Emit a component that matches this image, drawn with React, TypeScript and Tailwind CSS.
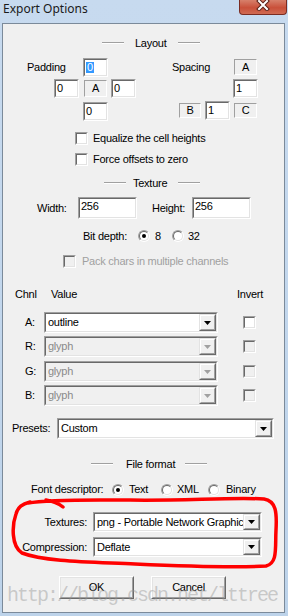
import React from "react";

const sunkenOuter =
  "border border-t-[#a0a0a0] border-l-[#a0a0a0] border-b-white border-r-white";
const sunkenInner =
  "border border-t-[#696969] border-l-[#696969] border-b-[#e3e3e3] border-r-[#e3e3e3]";
const raisedOuter =
  "border border-t-[#e3e3e3] border-l-[#e3e3e3] border-b-[#696969] border-r-[#696969]";
const raisedInner =
  "border border-t-white border-l-white border-b-[#a0a0a0] border-r-[#a0a0a0]";

function Edit({ cls, children, top }: { cls: string; children?: React.ReactNode; top?: boolean }) {
  return (
    <div className={`${cls} ${sunkenOuter} flex shrink-0`}>
      <div
        className={`flex-1 ${sunkenInner} bg-white flex ${top ? "items-start pt-[2px]" : "items-center"} pl-[1px] leading-none`}
      >
        {children}
      </div>
    </div>
  );
}

function Static({ cls, children }: { cls: string; children: React.ReactNode }) {
  return (
    <div className={`${cls} ${sunkenOuter} shrink-0 flex items-center justify-center leading-none`}>
      {children}
    </div>
  );
}

function Check({ disabled }: { disabled?: boolean }) {
  return (
    <div className={`w-[13px] h-[13px] shrink-0 ${sunkenOuter} flex`}>
      <div className={`flex-1 ${sunkenInner} ${disabled ? "bg-[#f0f0f0]" : "bg-white"}`} />
    </div>
  );
}

function Radio({ on }: { on?: boolean }) {
  return (
    <div className={`w-[12px] h-[12px] shrink-0 rounded-full ${sunkenOuter} flex`}>
      <div className={`flex-1 rounded-full ${sunkenInner} bg-white flex items-center justify-center`}>
        {on && <div className="w-[4px] h-[4px] rounded-full bg-black" />}
      </div>
    </div>
  );
}

function Arrow({ disabled }: { disabled?: boolean }) {
  return (
    <svg width="7" height="4" viewBox="0 0 7 4">
      <polygon points="0,0 7,0 3.5,4" fill={disabled ? "#a0a0a0" : "#000"} />
    </svg>
  );
}

function Combo({
  cls,
  text,
  disabled,
}: {
  cls: string;
  text: string;
  disabled?: boolean;
}) {
  return (
    <div className={`${cls} ${sunkenOuter} flex shrink-0`}>
      <div
        className={`flex-1 ${sunkenInner} ${disabled ? "bg-[#f0f0f0] text-[#8a8a8a]" : "bg-white"} flex items-stretch min-w-0`}
      >
        <div className="flex-1 min-w-0 overflow-hidden whitespace-nowrap flex items-center pl-[2px] leading-none">
          {text}
        </div>
        <div className={`w-[17px] shrink-0 ${raisedOuter} flex`}>
          <div className={`flex-1 ${raisedInner} bg-[#f0f0f0] flex items-center justify-center`}>
            <Arrow disabled={disabled} />
          </div>
        </div>
      </div>
    </div>
  );
}

function Line({ cls }: { cls: string }) {
  return <div className={`${cls} w-[22px] h-[2px] border-t border-t-[#a0a0a0] border-b border-b-white shrink-0`} />;
}

function Button({ cls, children }: { cls: string; children: React.ReactNode }) {
  return (
    <div className={`${cls} w-[75px] h-[23px] ${raisedOuter} flex shrink-0 border-t-white border-l-white`}>
      <div className={`flex-1 border border-t-[#e3e3e3] border-l-[#e3e3e3] border-b-[#a0a0a0] border-r-[#a0a0a0] bg-[#f0f0f0] flex items-center justify-center leading-none`}>
        {children}
      </div>
    </div>
  );
}

export default function App() {
  return (
    <div className="relative w-[288px] h-[616px] overflow-hidden bg-[linear-gradient(180deg,#c7daef,#bdd3ea)] font-['Liberation_Sans',sans-serif] text-[11px] tracking-[-0.25px] whitespace-nowrap text-black">
      {/* title bar */}
      <div className="h-[23px] flex justify-between items-start">
        <div className="pl-[3px] pt-[1px] text-[12px] tracking-normal leading-[16px] font-['Noto_Sans',sans-serif] text-[#1a1a1a]">
          Export Options
        </div>
        <div className="mr-[1px] w-[48px] h-[15px] rounded-b-[4px] border border-t-0 border-[#7a2c22] bg-[linear-gradient(180deg,#d7806b,#c9503a_55%,#d06a52)] flex justify-center">
          <svg width="14" height="11" viewBox="0 0 14 11">
            <path d="M3 1 L11 9 M11 1 L3 9" stroke="#5a2018" strokeWidth="4" strokeLinecap="square" />
            <path d="M3 1 L11 9 M11 1 L3 9" stroke="#ffffff" strokeWidth="2" strokeLinecap="square" />
          </svg>
        </div>
      </div>

      {/* client */}
      <div className="ml-[2px] w-[283px] h-[590px] border border-[#7b8a9a] bg-[#f0f0f0] flex flex-col">
        {/* Layout header */}
        <div className="mt-[12px] h-[14px] flex items-center">
          <Line cls="ml-[99px]" />
          <div className="ml-[11px] leading-none">Layout</div>
          <Line cls="ml-[11px]" />
        </div>

        {/* padding / spacing */}
        <div className="mt-[8px] flex flex-col">
          <div className="h-[19px] flex items-start">
            <div className="ml-[24px] w-[56px] h-[19px] flex items-center leading-none">Padding</div>
            <Edit cls="w-[25px] h-[19px]">
              <span className="bg-[#3399ff] text-white px-[1px]">0</span>
            </Edit>
            <div className="ml-[64px] w-[62px] h-[19px] flex items-center leading-none">Spacing</div>
            <Static cls="mt-[1px] w-[23px] h-[16px]">A</Static>
          </div>
          <div className="mt-[2px] h-[19px] flex items-center">
            <Edit cls="ml-[51px] w-[25px] h-[19px]">0</Edit>
            <Static cls="ml-[5px] w-[23px] h-[17px]">A</Static>
            <Edit cls="ml-[4px] w-[25px] h-[19px]">0</Edit>
            <Edit cls="ml-[97px] w-[25px] h-[19px]">1</Edit>
          </div>
          <div className="mt-[3px] h-[19px] flex items-start">
            <Edit cls="ml-[80px] mt-[1px] w-[25px] h-[19px]">0</Edit>
            <Static cls="ml-[71px] mt-[2px] w-[22px] h-[15px]">B</Static>
            <Edit cls="ml-[4px] w-[25px] h-[19px]">1</Edit>
            <Static cls="ml-[4px] mt-[2px] w-[23px] h-[15px]">C</Static>
          </div>
        </div>

        {/* checkboxes */}
        <div className="mt-[12px] h-[13px] flex items-center">
          <div className="ml-[72px]">
            <Check />
          </div>
          <div className="ml-[5px] leading-none">Equalize the cell heights</div>
        </div>
        <div className="mt-[8px] h-[13px] flex items-center">
          <div className="ml-[72px]">
            <Check />
          </div>
          <div className="ml-[5px] leading-none">Force offsets to zero</div>
        </div>

        {/* Texture header */}
        <div className="mt-[10px] h-[14px] flex items-center">
          <Line cls="ml-[101px]" />
          <div className="ml-[7px] leading-none">Texture</div>
          <Line cls="ml-[11px]" />
        </div>

        <div className="mt-[7px] h-[22px] flex items-center">
          <div className="ml-[34px] w-[41px] leading-none">Width:</div>
          <Edit cls="w-[59px] h-[22px]" top>
            256
          </Edit>
          <div className="ml-[15px] w-[40px] leading-none">Height:</div>
          <Edit cls="w-[59px] h-[22px]" top>
            256
          </Edit>
        </div>

        <div className="mt-[11px] h-[12px] flex items-center">
          <div className="ml-[80px] w-[55px] leading-none">Bit depth:</div>
          <Radio on />
          <div className="ml-[5px] w-[17px] leading-none">8</div>
          <Radio />
          <div className="ml-[4px] leading-none">32</div>
        </div>

        <div className="mt-[13px] h-[13px] flex items-center">
          <div className="ml-[60px]">
            <Check disabled />
          </div>
          <div className="ml-[6px] leading-none text-[#a0a0a0]">Pack chars in multiple channels</div>
        </div>

        {/* channels */}
        <div className="mt-[19px] h-[14px] flex items-center">
          <div className="ml-[12px] w-[36px] leading-none">Chnl</div>
          <div className="w-[186px] leading-none">Value</div>
          <div className="leading-none">Invert</div>
        </div>

        {[
          { l: "A:", t: "outline", d: false, mt: "mt-[11px]" },
          { l: "R:", t: "glyph", d: true, mt: "mt-[3px]" },
          { l: "G:", t: "glyph", d: true, mt: "mt-[4px]" },
          { l: "B:", t: "glyph", d: true, mt: "mt-[3px]" },
        ].map((r) => (
          <div key={r.l} className={`${r.mt} h-[21px] flex items-center`}>
            <div className="ml-[22px] w-[19px] leading-none">{r.l}</div>
            <Combo cls="w-[174px] h-[21px]" text={r.t} disabled={r.d} />
            <div className="ml-[25px]">
              <Check disabled={r.d} />
            </div>
          </div>
        ))}

        <div className="mt-[12px] h-[21px] flex items-center">
          <div className="ml-[9px] w-[45px] leading-none">Presets:</div>
          <Combo cls="w-[217px] h-[21px]" text="Custom" />
        </div>

        {/* File format header */}
        <div className="mt-[18px] h-[14px] flex items-center">
          <Line cls="ml-[88px]" />
          <div className="ml-[13px] leading-none">File format</div>
          <Line cls="ml-[10px]" />
        </div>

        <div className="mt-[12px] h-[13px] flex items-center">
          <div className="ml-[28px] w-[81px] leading-none">Font descriptor:</div>
          <Radio on />
          <div className="ml-[5px] w-[32px] leading-none">Text</div>
          <Radio />
          <div className="ml-[4px] w-[31px] leading-none">XML</div>
          <Radio />
          <div className="ml-[6px] leading-none">Binary</div>
        </div>

        <div className="mt-[16px] h-[20px] flex items-center">
          <div className="w-[84px] text-right leading-none">Textures:</div>
          <Combo cls="ml-[6px] w-[169px] h-[20px]" text="png - Portable Network Graphics" />
        </div>
        <div className="mt-[5px] h-[20px] flex items-center">
          <div className="w-[84px] text-right leading-none">Compression:</div>
          <Combo cls="ml-[6px] w-[169px] h-[20px]" text="Deflate" />
        </div>

        <div className="mt-[19px] h-[23px] flex items-center">
          <Button cls="ml-[56px]">OK</Button>
          <Button cls="ml-[17px]">Cancel</Button>
        </div>
      </div>

      {/* red annotation */}
      <svg className="absolute left-0 top-0 pointer-events-none" width="288" height="616" viewBox="0 0 288 616">
        <path
          d="M63 507 C58 503 52 501 46 500 M28 503 C50 499 90 500 130 500 C180 501 235 497 264 499 C276 501 277 512 276 530 C275 548 278 563 266 566 C235 568 180 566 135 564 C95 562 45 562 22 553 C11 546 12 525 16 514 C18 507 22 504 30 502"
          fill="none"
          stroke="#ff0000"
          strokeWidth="3.5"
          strokeLinecap="round"
          strokeLinejoin="round"
        />
      </svg>

      {/* watermark */}
      <div className="absolute left-[7px] top-[584px] pointer-events-none whitespace-nowrap font-['Liberation_Mono',monospace] text-[20px] leading-[24px] tracking-[-2px] text-[rgba(150,150,150,0.45)]">
        http://blog.csdn.net/lttree
      </div>
    </div>
  );
}
